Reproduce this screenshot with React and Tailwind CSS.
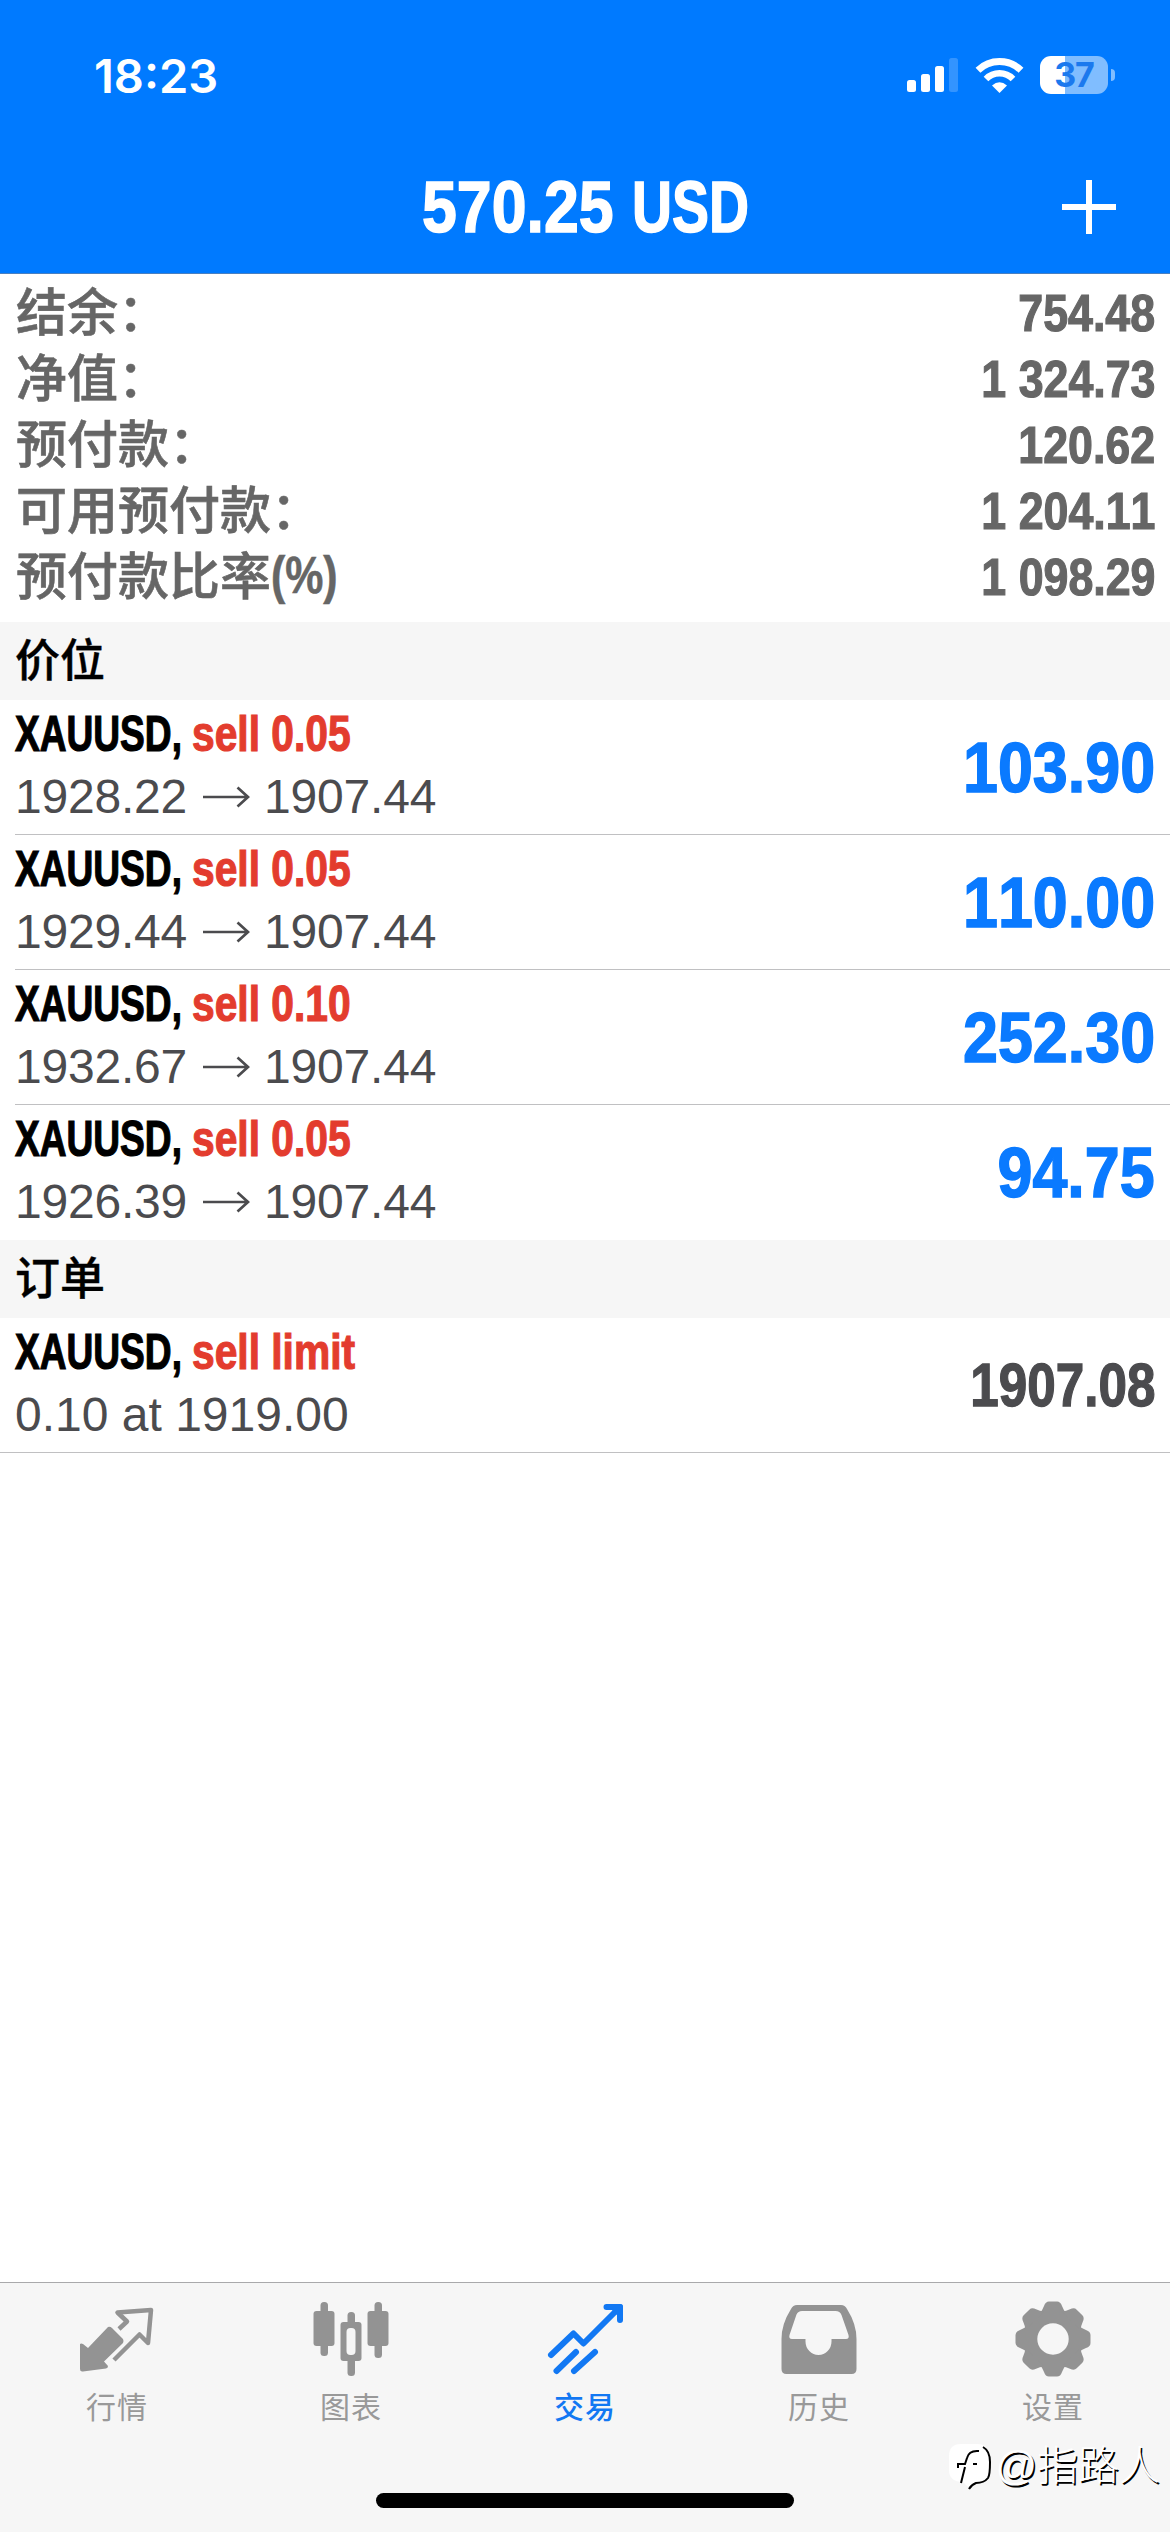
import React from 'react';

const summary = [
  { label: '结余：', value: '754.48' },
  { label: '净值：', value: '1 324.73' },
  { label: '预付款：', value: '120.62' },
  { label: '可用预付款：', value: '1 204.11' },
  { label: '预付款比率(%)', value: '1 098.29' },
];

const positions = [
  { id: 1, symbol: 'XAUUSD', side: 'sell 0.05', open: '1928.22', current: '1907.44', profit: '103.90' },
  { id: 2, symbol: 'XAUUSD', side: 'sell 0.05', open: '1929.44', current: '1907.44', profit: '110.00' },
  { id: 3, symbol: 'XAUUSD', side: 'sell 0.10', open: '1932.67', current: '1907.44', profit: '252.30' },
  { id: 4, symbol: 'XAUUSD', side: 'sell 0.05', open: '1926.39', current: '1907.44', profit: '94.75' },
];

const QuotesIcon = () => (
  <svg width="78" height="78" viewBox="0 0 78 78" fill="none">
    <path d="M31 27 Q33 26 35 28 L46 39 Q47 41 46 43 L27 61.500 L31 66 Q31 68 29 68.500 L6 71.500 Q3 72 3 69 V44 Q4 43 6 44 L11 48 Z" transform="translate(-1 0)" fill="#939393" />
    <path d="M41 29 L49 21.500 L39.500 12.500 L73 10 L70 43 L61.500 34.500 L36 60" stroke="#939393" strokeWidth="4.500" strokeLinejoin="round" />
  </svg>
);

const ChartIcon = () => (
  <svg width="78" height="78" viewBox="0 0 78 78" fill="#939393">
    <rect x="8.500" y="2" width="7.500" height="54" rx="3.500" />
    <rect x="1.500" y="11" width="21" height="35" rx="3" />
    <rect x="35.500" y="12" width="7.500" height="64" rx="3.500" />
    <rect x="28.500" y="22" width="21" height="39" rx="3" />
    <rect x="34.500" y="28" width="9" height="27" rx="4" fill="#f6f6f6" />
    <rect x="62.500" y="2" width="7.500" height="56" rx="3.500" />
    <rect x="55.500" y="11" width="21" height="35" rx="3" />
  </svg>
);

const TradeIcon = () => (
  <svg width="78" height="78" viewBox="0 0 78 78" fill="none" stroke="#1278f3" strokeWidth="6" strokeLinecap="round" strokeLinejoin="round">
    <path d="M5 55 L27.500 33.500 L37.500 43.500 L71 10" />
    <path d="M60.500 7 H74 V20" />
    <path d="M63 7 H74 V18" fill="#1278f3" />
    <path d="M10.500 71 L30 52" />
    <path d="M28 71 L49 52" />
  </svg>
);

const HistoryIcon = () => (
  <svg width="78" height="78" viewBox="0 0 78 78">
    <path
      fill="#939393"
      fillRule="evenodd"
      d="M17 5 H61 Q65 5 67 9 Q76.500 24 76.500 39 V69 Q76.500 74 71.500 74 H6.500 Q1.500 74 1.500 69 V39 Q1.500 24 11 9 Q13 5 17 5 Z M22 11 Q18 11 16.500 14.500 L9.500 35 Q8.500 39 12 39 H25.500 V41.500 A12.500 13 0 0 0 51.500 41.500 V39 H66 Q69.500 39 68.500 35 L61.500 15 Q60 11 55.500 11 Z"
    />
  </svg>
);

const SettingsIcon = () => (
  <svg width="78" height="78" viewBox="-39 -39 78 78">
    <g fill="#939393">
      <circle r="30" />
      {[0, 45, 90, 135, 180, 225, 270, 315].map(angle => (
        <path key={angle} transform={`rotate(${angle})`} d="M-13 -26 Q-10.500 -29 -9 -33 Q-7.500 -37.500 -4 -37.500 H4 Q7.500 -37.500 9 -33 Q10.500 -29 13 -26 Z" />
      ))}
    </g>
    <circle r="15.700" fill="#f6f6f6" />
  </svg>
);

const tabs = [
  { name: '行情', Icon: QuotesIcon },
  { name: '图表', Icon: ChartIcon },
  { name: '交易', Icon: TradeIcon, active: true },
  { name: '历史', Icon: HistoryIcon },
  { name: '设置', Icon: SettingsIcon },
];

const StatusBar = () => (
  <div className="flex h-[150px] items-center justify-between pl-[94px] pr-[55px]">
    <span className="font-[Inter] text-[47px] leading-none font-semibold">18:23</span>
    <div className="flex items-center">
      <svg width="52" height="36" viewBox="0 0 52 36" fill="#fff">
        <rect x="0" y="23" width="9" height="12" rx="2.500" />
        <rect x="14" y="17" width="9" height="18" rx="2.500" />
        <rect x="28" y="9" width="9" height="26" rx="2.500" />
        <rect x="42" y="1" width="9" height="34" rx="2.500" opacity="0.2" />
      </svg>
      <svg className="ml-[16px]" width="49" height="37" viewBox="0 0 49 37" fill="none" stroke="#fff">
        <path d="M3 13.200 A31 31 0 0 1 46 13.200" strokeWidth="7" />
        <path d="M11 22 A19 19 0 0 1 38 22" strokeWidth="6.500" />
        <path d="M24.500 36 L17 28.500 Q24.500 22 32 28.500 Z" fill="#fff" stroke="none" />
      </svg>
      <div className="ml-[16px] flex h-[38px] w-[68px] items-center justify-center rounded-[11px] bg-linear-to-r from-white from-37% to-[#80bdff] to-37%">
        <span className="font-[Inter] text-[34px] leading-none font-bold tracking-[-1px] text-[#1b79ee]">37</span>
      </div>
      <div className="ml-[3px] h-[12px] w-[4px] rounded-r-full bg-[#80bdff]" />
    </div>
  </div>
);

const SectionTitle = ({ children }) => (
  <div className="flex h-[78px] items-center bg-[#f6f6f6] pl-[15px] text-[45px] leading-none font-medium text-black [-webkit-text-stroke:0.4px]">{children}</div>
);

const OrderTitle = ({ symbol, side }) => (
  <div className="flex h-[50px] text-[50px] leading-[50px] font-bold whitespace-nowrap [-webkit-text-stroke:1.2px]">
    <span className="w-[177px]">
      <span className="inline-block origin-left scale-x-[0.742] text-black">{symbol},</span>
    </span>
    <span className="inline-block origin-left scale-x-[0.815] text-[#e33c2e]">{side}</span>
  </div>
);

const Arrow = () => (
  <svg className="mr-[14px] ml-[16px]" width="47" height="22" viewBox="0 0 47 22" fill="none" stroke="#4b4b4e" strokeWidth="2.700">
    <path d="M0 11 H45 M34.500 1.500 L45 11 L34.500 20.500" />
  </svg>
);

export default function App() {
  return (
    <div className="relative flex h-[2532px] w-[1170px] flex-col overflow-hidden bg-white font-['Liberation_Sans','Noto_Sans_CJK_SC',sans-serif] [font-kerning:none]">
      <header className="h-[274px] border-b border-[#4a80c0] bg-[#007aff] text-white">
        <StatusBar />
        <div className="grid h-[114px] grid-cols-[1fr_auto_1fr] items-center">
          <div />
          <h1 className="flex w-[326px] text-[72px] leading-none font-bold whitespace-nowrap [-webkit-text-stroke:1.5px]">
            <span className="w-[210px]">
              <span className="inline-block origin-left scale-x-[0.87]">570.25</span>
            </span>
            <span className="inline-block w-[116px] origin-left scale-x-[0.77]">USD</span>
          </h1>
          <svg className="mr-[54px] justify-self-end" width="54" height="54" viewBox="0 0 54 54" stroke="#fff" strokeWidth="6">
            <path d="M27 0 V54 M0 27 H54" />
          </svg>
        </div>
      </header>

      <section className="h-[348px] pt-[6px] pr-[15px] pl-[16px] text-[#666]">
        {summary.map(row => (
          <div key={row.label} className="flex h-[66px] items-center justify-between">
            <span className="pt-[2px] text-[51px] leading-[66px] font-medium [-webkit-text-stroke:0.6px]">
              {row.label.replace('(%)', '')}
              {row.label.includes('(%)') && (
                <span className="inline-block origin-left -translate-y-[2px] scale-x-[0.84] font-bold">(%)</span>
              )}
            </span>
            <span className="origin-right scale-x-[0.86] text-[52px] leading-[66px] font-bold [-webkit-text-stroke:1.2px]">{row.value}</span>
          </div>
        ))}
      </section>

      <SectionTitle>价位</SectionTitle>
      {positions.map((p, i) => (
        <div key={p.id} className="ml-[15px] h-[135px]">
          <div className={`flex h-full items-center justify-between pr-[15px] ${i < positions.length - 1 ? 'border-b border-[#c0c0c2]' : ''}`}>
            <div className="flex flex-col gap-[14px] pb-[5px]">
              <OrderTitle symbol={p.symbol} side={p.side} />
              <div className="flex items-center text-[48px] leading-[48px] tracking-[-0.2px] text-[#4b4b4e]">
                {p.open}
                <Arrow />
                {p.current}
              </div>
            </div>
            <span className="origin-right scale-x-[0.885] text-[71px] leading-none font-bold text-[#0a7aff] [-webkit-text-stroke:1.5px]">{p.profit}</span>
          </div>
        </div>
      ))}

      <SectionTitle>订单</SectionTitle>
      <div className="flex h-[135px] items-center justify-between border-b border-[#c0c0c2] px-[15px]">
        <div className="flex flex-col gap-[14px] pb-[5px]">
          <OrderTitle symbol="XAUUSD" side="sell limit" />
          <div className="text-[48px] leading-[48px] text-[#4b4b4e]">0.10 at 1919.00</div>
        </div>
        <span className="origin-right scale-x-[0.84] text-[61px] leading-none font-bold text-[#4b4b4e] [-webkit-text-stroke:1.3px]">1907.08</span>
      </div>

      <nav className="mt-auto flex h-[250px] flex-col items-center border-t border-[#a9a9ab] bg-[#f6f6f6]">
        <div className="grid w-full grid-cols-5 pt-[17px]">
          {tabs.map(({ name, Icon, active }) => (
            <div key={name} className="flex flex-col items-center">
              <Icon />
              <span className={`mt-[10px] text-[30px] leading-[40px] tracking-[1px] ${active ? 'font-medium text-[#1278f3]' : 'text-[#999]'}`}>{name}</span>
            </div>
          ))}
        </div>
        <div className="mt-auto mb-[24px] h-[15px] w-[418px] rounded-full bg-black" />
      </nav>

      {/* author mark over the tab bar */}
      <div className="absolute right-[10px] bottom-[40px] flex items-center">
        <svg width="46" height="52" viewBox="0 0 46 52" fill="none">
          <path d="M12 4 H28 Q40 4 40 16 V30 Q40 42 26 42 L20 48 L14 42 Q0 42 0 30 V16 Q0 4 12 4 Z" fill="#fff" />
          <path d="M34 7 Q41 11 41 22 Q41 35 39 38 Q35 43 27 43 Q22 45 20 49" stroke="#000" strokeWidth="2" />
          <path d="M30 11 Q20 10 18 18 L16 24 H9 V28 M16 27 L12 43 M24 24 H28" stroke="#000" strokeWidth="2" />
        </svg>
        <span className="text-[41px] leading-none font-light whitespace-nowrap text-white [text-shadow:1.5px_1.5px_0.5px_#000]">@指路人</span>
      </div>
    </div>
  );
}
